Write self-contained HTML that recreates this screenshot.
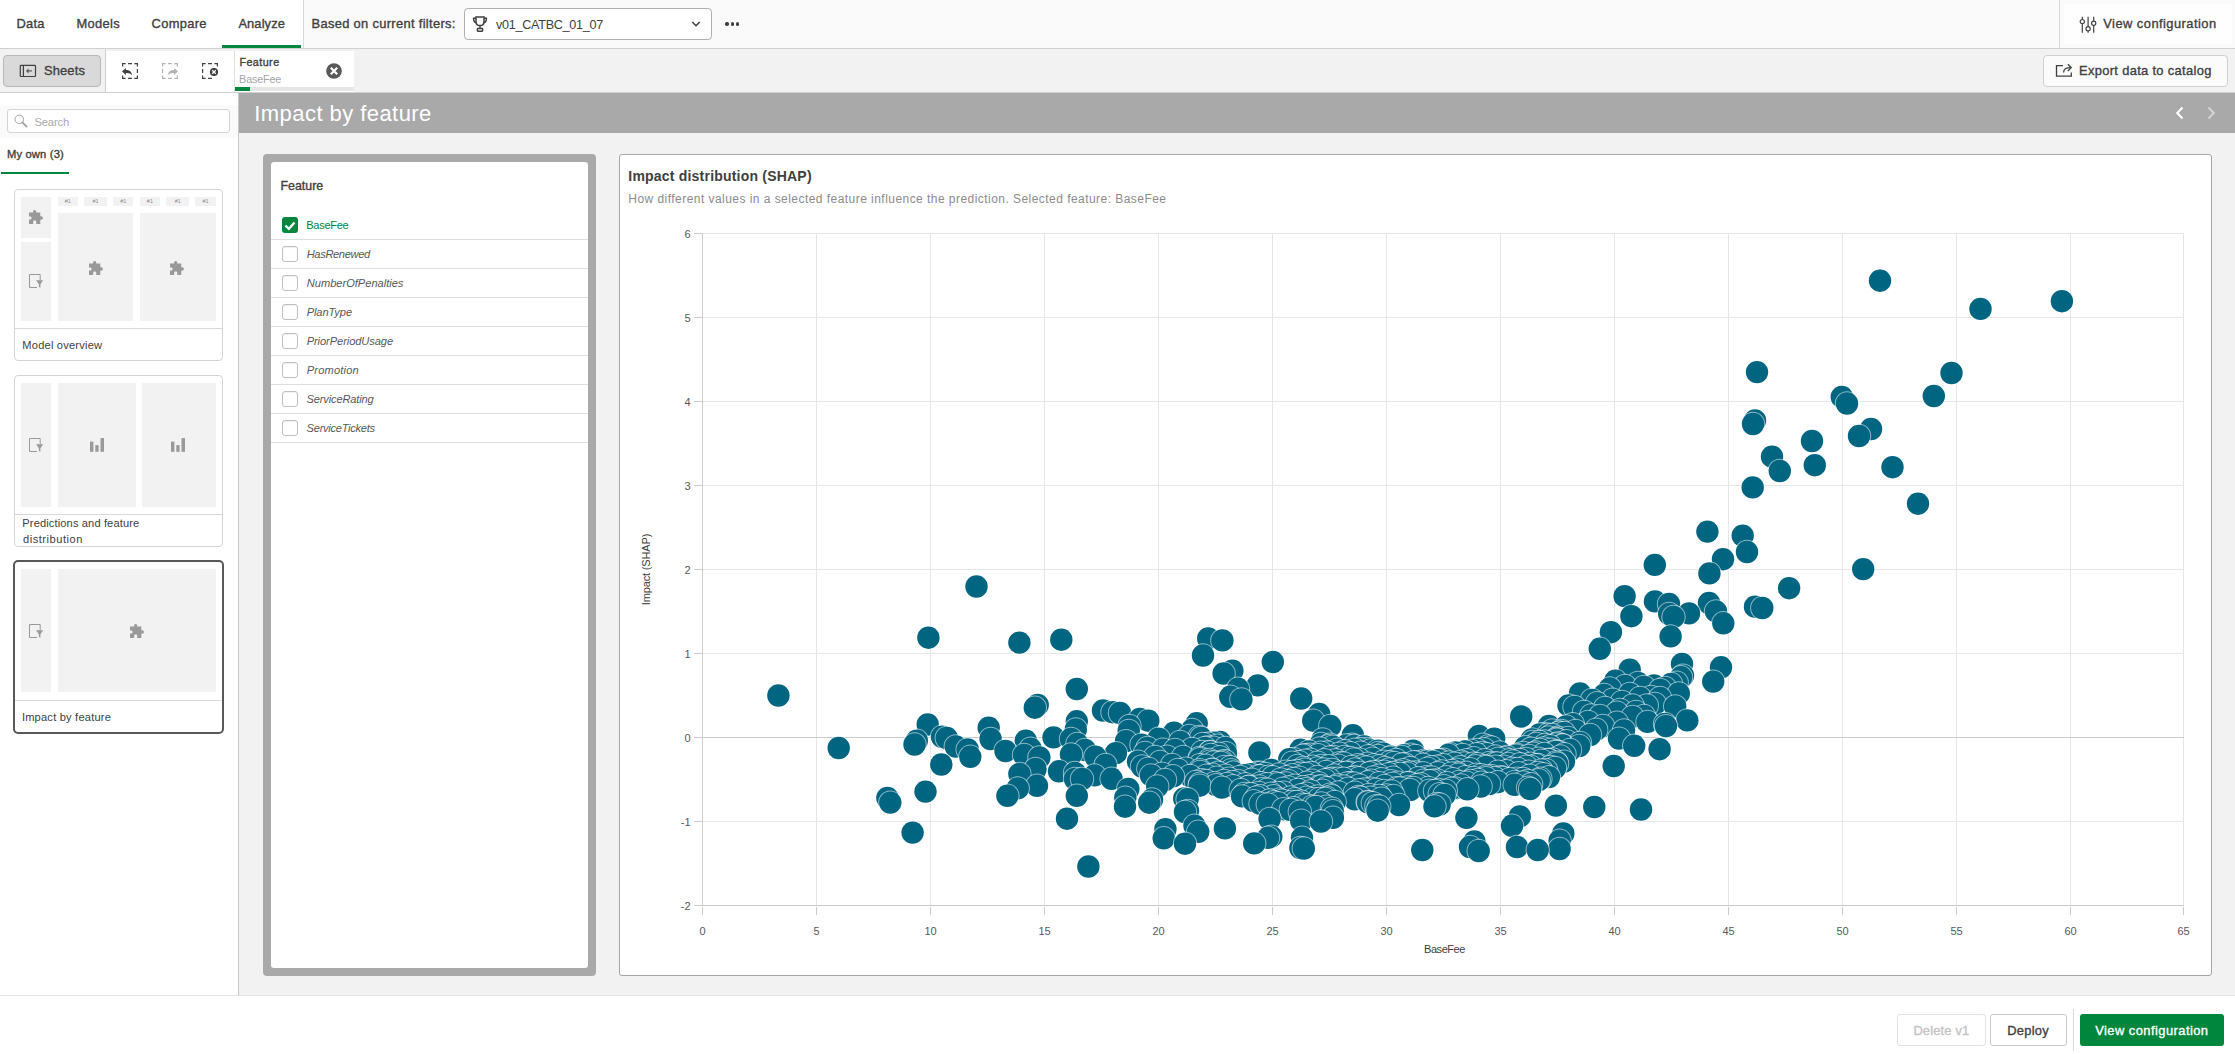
<!DOCTYPE html>
<html lang="en">
<head>
<meta charset="utf-8">
<title>Impact by feature</title>
<style>
*{box-sizing:border-box;margin:0;padding:0}
html,body{width:2235px;height:1054px;overflow:hidden;background:#fff}
body{font-family:"Liberation Sans",sans-serif;color:#404040;position:relative;font-size:13px}
.abs{position:absolute}
.t{position:absolute;white-space:nowrap;line-height:1}
#top{left:0;top:0;width:2235px;height:48px;background:#fafafa}
#topline{left:0;top:48px;width:2235px;height:1px;background:#d0d0d0}
#tabs{left:0;top:0;width:303px;height:48px;background:#fff}
#tabdiv{left:303px;top:0;width:1px;height:48px;background:#d9d9d9}
#analyzeline{left:222px;top:45px;width:79px;height:3px;background:#00873d}
#dd{left:464px;top:8px;width:248px;height:32px;background:#fff;border:1px solid #b0b0b0;border-radius:4px}
#vcdiv{left:2059px;top:0;width:1px;height:48px;background:#d9d9d9}
#vcbtn{left:2064px;top:4px;width:168px;height:40px;background:#fefefe;border-radius:4px}
#bar2{left:0;top:49px;width:2235px;height:43px;background:#f2f2f2}
#bar2line{left:0;top:92px;width:2235px;height:1px;background:#d0d0d0}
#sheetsbtn{left:3px;top:55px;width:98px;height:32px;background:#d9d9d9;border:1px solid #b8b8b8;border-radius:4px}
#bar2div{left:105px;top:49px;width:1px;height:44px;background:#cfcfcf}
#selbar{left:106px;top:51px;width:248px;height:41px;background:#fff}
#chipdiv{left:234px;top:51px;width:1px;height:41px;background:#e0e0e0}
#chipbar{left:235px;top:87px;width:119px;height:4px;background:#e6e6e6}
#chipbarg{left:235px;top:87px;width:15px;height:4px;background:#00873d}
#exportbtn{left:2043px;top:55px;width:185px;height:32px;background:#fbfbfb;border:1px solid #d0d0d0;border-radius:4px}
#side{left:0;top:93px;width:238px;height:902px;background:#fff}
#sideline{left:238px;top:93px;width:1px;height:902px;background:#c8c8c8}
#searchband{left:0;top:105px;width:238px;height:33px;background:#fafafa}
#search{left:7px;top:109px;width:223px;height:24px;background:#fff;border:1px solid #d4d4d4;border-radius:3px}
#myline{left:1px;top:172px;width:68px;height:2px;background:#00873d}
.card{background:#fff;border:1px solid #d4d4d4;border-radius:4px}
.cardline{height:1px;background:#d9d9d9}
.tile{background:#f2f2f2}
#main{left:239px;top:93px;width:1996px;height:902px;background:#f2f2f2}
#titlebar{left:239px;top:93px;width:1996px;height:40px;background:#a9a9a9}
#featouter{left:263px;top:154px;width:333px;height:822px;background:#a9a9a9;border-radius:4px}
#featinner{left:271px;top:162px;width:317px;height:806px;background:#fff;border-radius:3px}
.frow{left:271px;width:317px;height:1px;background:#dedede}
.cb{left:282px;width:16px;height:16px;border:1px solid #bfbfbf;border-radius:3px;background:#fff;box-shadow:inset 0 1px 1px rgba(0,0,0,0.06)}
#chart{left:619px;top:154px;width:1593px;height:822px;background:#fff;border:1px solid #a6a6a6;border-radius:3px}
#botline{left:0;top:995px;width:2235px;height:1px;background:#e3e3e3}
#bottom{left:0;top:996px;width:2235px;height:58px;background:#fff}
.btn{border:1px solid #c9c9c9;border-radius:3px;background:#fff;height:32px;top:1014px}
</style>
</head>
<body>
<div class="abs" id="top"></div>
<div class="abs" id="tabs"></div>
<div class="abs" id="tabdiv"></div>
<div class="abs" id="topline"></div>
<div class="abs" id="analyzeline"></div>
<div class="abs" id="dd"></div>
<div class="abs" id="vcdiv"></div>
<div class="abs" id="vcbtn"></div>
<div class="abs" id="bar2"></div>
<div class="abs" id="bar2line"></div>
<div class="abs" id="sheetsbtn"></div>
<div class="abs" id="bar2div"></div>
<div class="abs" id="selbar"></div>
<div class="abs" id="chipdiv"></div>
<div class="abs" id="chipbar"></div>
<div class="abs" id="chipbarg"></div>
<div class="abs" id="exportbtn"></div>
<div class="abs" id="side"></div>
<div class="abs" id="sideline"></div>
<div class="abs" id="searchband"></div>
<div class="abs" id="search"></div>
<div class="abs" id="myline"></div>
<div class="abs card" style="left:14px;top:189px;width:209px;height:172px"></div>
<div class="abs tile" style="left:21.4px;top:197.0px;width:29.8px;height:40.5px"></div>
<div class="abs tile" style="left:21.4px;top:242.0px;width:29.8px;height:79.0px"></div>
<div class="abs tile" style="left:57.7px;top:197.0px;width:20.1px;height:8.6px"></div>
<div class="t" style="left:57.7px;width:20.1px;text-align:center;top:199.3px;font-size:5.5px;color:#8c8c8c">#1</div>
<div class="abs tile" style="left:84.1px;top:197.0px;width:22.7px;height:8.6px"></div>
<div class="t" style="left:84.1px;width:22.7px;text-align:center;top:199.3px;font-size:5.5px;color:#8c8c8c">#1</div>
<div class="abs tile" style="left:113.3px;top:197.0px;width:20.1px;height:8.6px"></div>
<div class="t" style="left:113.3px;width:20.1px;text-align:center;top:199.3px;font-size:5.5px;color:#8c8c8c">#1</div>
<div class="abs tile" style="left:139.8px;top:197.0px;width:20.2px;height:8.6px"></div>
<div class="t" style="left:139.8px;width:20.2px;text-align:center;top:199.3px;font-size:5.5px;color:#8c8c8c">#1</div>
<div class="abs tile" style="left:166.4px;top:197.0px;width:22.6px;height:8.6px"></div>
<div class="t" style="left:166.4px;width:22.6px;text-align:center;top:199.3px;font-size:5.5px;color:#8c8c8c">#1</div>
<div class="abs tile" style="left:195.4px;top:197.0px;width:20.2px;height:8.6px"></div>
<div class="t" style="left:195.4px;width:20.2px;text-align:center;top:199.3px;font-size:5.5px;color:#8c8c8c">#1</div>
<div class="abs tile" style="left:57.7px;top:213.2px;width:75.7px;height:107.8px"></div>
<div class="abs tile" style="left:139.8px;top:213.2px;width:75.8px;height:107.8px"></div>
<div class="abs cardline" style="left:15px;top:328px;width:207px"></div>
<svg class="abs" style="left:28.9px;top:210.3px" width="14" height="14" viewBox="0 0 14 14"><path d="M0 2.4 H4.3 C3.6 1 4.6 0 5.7 0 C6.8 0 7.8 1 7.1 2.4 H11.3 V6.6 C12.7 5.9 13.9 6.9 13.9 8 C13.9 9.1 12.7 10.1 11.3 9.4 V13.9 H7.2 V11.2 C7.2 10.4 4.2 10.4 4.2 11.2 V13.9 H0 V9.6 H1.4 C3 9.6 3 6.6 1.4 6.6 H0 Z" fill="#999"/></svg>
<svg class="abs" style="left:29.0px;top:274.0px" width="15" height="15" viewBox="0 0 15 15"><path d="M11.2 6 V0.5 H0.5 V13.5 H8" fill="none" stroke="#999" stroke-width="1"/><path d="M7 6.3 H14.2 L11.4 10.2 V13.8 L9.9 12.9 V10.2 Z" fill="#999"/></svg>
<svg class="abs" style="left:88.5px;top:260.5px" width="14" height="14" viewBox="0 0 14 14"><path d="M0 2.4 H4.3 C3.6 1 4.6 0 5.7 0 C6.8 0 7.8 1 7.1 2.4 H11.3 V6.6 C12.7 5.9 13.9 6.9 13.9 8 C13.9 9.1 12.7 10.1 11.3 9.4 V13.9 H7.2 V11.2 C7.2 10.4 4.2 10.4 4.2 11.2 V13.9 H0 V9.6 H1.4 C3 9.6 3 6.6 1.4 6.6 H0 Z" fill="#999"/></svg>
<svg class="abs" style="left:170.2px;top:260.5px" width="14" height="14" viewBox="0 0 14 14"><path d="M0 2.4 H4.3 C3.6 1 4.6 0 5.7 0 C6.8 0 7.8 1 7.1 2.4 H11.3 V6.6 C12.7 5.9 13.9 6.9 13.9 8 C13.9 9.1 12.7 10.1 11.3 9.4 V13.9 H7.2 V11.2 C7.2 10.4 4.2 10.4 4.2 11.2 V13.9 H0 V9.6 H1.4 C3 9.6 3 6.6 1.4 6.6 H0 Z" fill="#999"/></svg>
<div class="abs card" style="left:14px;top:375px;width:209px;height:172px"></div>
<div class="abs tile" style="left:21.4px;top:383.3px;width:29.8px;height:123.3px"></div>
<div class="abs tile" style="left:57.7px;top:383.3px;width:78.2px;height:123.3px"></div>
<div class="abs tile" style="left:142.1px;top:383.3px;width:73.5px;height:123.3px"></div>
<div class="abs cardline" style="left:15px;top:514px;width:207px"></div>
<svg class="abs" style="left:29.0px;top:438.0px" width="15" height="15" viewBox="0 0 15 15"><path d="M11.2 6 V0.5 H0.5 V13.5 H8" fill="none" stroke="#999" stroke-width="1"/><path d="M7 6.3 H14.2 L11.4 10.2 V13.8 L9.9 12.9 V10.2 Z" fill="#999"/></svg>
<svg class="abs" style="left:89.8px;top:438.0px" width="14" height="14" viewBox="0 0 14 14"><rect x="0" y="3.6" width="3.4" height="10.2" fill="#999"/><rect x="5.3" y="7.1" width="3.3" height="6.7" fill="#999"/><rect x="10.5" y="0.1" width="3.5" height="13.7" fill="#999"/></svg>
<svg class="abs" style="left:171.4px;top:438.0px" width="14" height="14" viewBox="0 0 14 14"><rect x="0" y="3.6" width="3.4" height="10.2" fill="#999"/><rect x="5.3" y="7.1" width="3.3" height="6.7" fill="#999"/><rect x="10.5" y="0.1" width="3.5" height="13.7" fill="#999"/></svg>
<div class="abs card" style="left:13px;top:560px;width:211px;height:174px;border:2px solid #595959;border-radius:5px"></div>
<div class="abs tile" style="left:21.4px;top:569.0px;width:29.8px;height:123.3px"></div>
<div class="abs tile" style="left:57.7px;top:569.0px;width:157.9px;height:123.3px"></div>
<div class="abs cardline" style="left:15px;top:700px;width:207px"></div>
<svg class="abs" style="left:29.0px;top:624.0px" width="15" height="15" viewBox="0 0 15 15"><path d="M11.2 6 V0.5 H0.5 V13.5 H8" fill="none" stroke="#999" stroke-width="1"/><path d="M7 6.3 H14.2 L11.4 10.2 V13.8 L9.9 12.9 V10.2 Z" fill="#999"/></svg>
<svg class="abs" style="left:129.7px;top:624.3px" width="14" height="14" viewBox="0 0 14 14"><path d="M0 2.4 H4.3 C3.6 1 4.6 0 5.7 0 C6.8 0 7.8 1 7.1 2.4 H11.3 V6.6 C12.7 5.9 13.9 6.9 13.9 8 C13.9 9.1 12.7 10.1 11.3 9.4 V13.9 H7.2 V11.2 C7.2 10.4 4.2 10.4 4.2 11.2 V13.9 H0 V9.6 H1.4 C3 9.6 3 6.6 1.4 6.6 H0 Z" fill="#999"/></svg>
<div class="abs" id="main"></div>
<div class="abs" id="titlebar"></div>
<div class="abs" id="featouter"></div>
<div class="abs" id="featinner"></div>
<div class="abs frow" style="top:239px"></div>
<div class="abs" style="left:282px;top:217px;width:16px;height:16px;border-radius:3px;background:#00873d"></div>
<svg class="abs" style="left:282px;top:217px" width="16" height="16" viewBox="0 0 16 16"><path d="M3.4 8.6 L6.9 11.8 L12.5 5.6" fill="none" stroke="#fff" stroke-width="2.3"/></svg>
<div class="abs frow" style="top:268px"></div>
<div class="abs cb" style="top:246px"></div>
<div class="abs frow" style="top:297px"></div>
<div class="abs cb" style="top:275px"></div>
<div class="abs frow" style="top:326px"></div>
<div class="abs cb" style="top:304px"></div>
<div class="abs frow" style="top:355px"></div>
<div class="abs cb" style="top:333px"></div>
<div class="abs frow" style="top:384px"></div>
<div class="abs cb" style="top:362px"></div>
<div class="abs frow" style="top:413px"></div>
<div class="abs cb" style="top:391px"></div>
<div class="abs frow" style="top:442px"></div>
<div class="abs cb" style="top:420px"></div>
<div class="abs" id="chart"></div>
<svg class="abs" style="left:0;top:0" width="2235" height="1054" viewBox="0 0 2235 1054" font-family="Liberation Sans, sans-serif">
<line x1="816.5" y1="233" x2="816.5" y2="906" stroke="#e6e6e6" stroke-width="1"/>
<line x1="930.5" y1="233" x2="930.5" y2="906" stroke="#e6e6e6" stroke-width="1"/>
<line x1="1044.5" y1="233" x2="1044.5" y2="906" stroke="#e6e6e6" stroke-width="1"/>
<line x1="1158.5" y1="233" x2="1158.5" y2="906" stroke="#e6e6e6" stroke-width="1"/>
<line x1="1272.5" y1="233" x2="1272.5" y2="906" stroke="#e6e6e6" stroke-width="1"/>
<line x1="1386.5" y1="233" x2="1386.5" y2="906" stroke="#e6e6e6" stroke-width="1"/>
<line x1="1500.5" y1="233" x2="1500.5" y2="906" stroke="#e6e6e6" stroke-width="1"/>
<line x1="1614.5" y1="233" x2="1614.5" y2="906" stroke="#e6e6e6" stroke-width="1"/>
<line x1="1728.5" y1="233" x2="1728.5" y2="906" stroke="#e6e6e6" stroke-width="1"/>
<line x1="1842.5" y1="233" x2="1842.5" y2="906" stroke="#e6e6e6" stroke-width="1"/>
<line x1="1956.5" y1="233" x2="1956.5" y2="906" stroke="#e6e6e6" stroke-width="1"/>
<line x1="2070.5" y1="233" x2="2070.5" y2="906" stroke="#e6e6e6" stroke-width="1"/>
<line x1="2183.5" y1="233" x2="2183.5" y2="906" stroke="#e6e6e6" stroke-width="1"/>
<line x1="703" y1="233.5" x2="2184" y2="233.5" stroke="#e6e6e6" stroke-width="1"/>
<line x1="703" y1="317.5" x2="2184" y2="317.5" stroke="#e6e6e6" stroke-width="1"/>
<line x1="703" y1="401.5" x2="2184" y2="401.5" stroke="#e6e6e6" stroke-width="1"/>
<line x1="703" y1="485.5" x2="2184" y2="485.5" stroke="#e6e6e6" stroke-width="1"/>
<line x1="703" y1="569.5" x2="2184" y2="569.5" stroke="#e6e6e6" stroke-width="1"/>
<line x1="703" y1="653.5" x2="2184" y2="653.5" stroke="#e6e6e6" stroke-width="1"/>
<line x1="703" y1="737.5" x2="2184" y2="737.5" stroke="#cccccc" stroke-width="1"/>
<line x1="703" y1="821.5" x2="2184" y2="821.5" stroke="#e6e6e6" stroke-width="1"/>
<line x1="703" y1="905.5" x2="2184" y2="905.5" stroke="#cccccc" stroke-width="1"/>
<line x1="702.5" y1="907" x2="702.5" y2="915" stroke="#cccccc" stroke-width="1"/>
<line x1="816.5" y1="907" x2="816.5" y2="915" stroke="#cccccc" stroke-width="1"/>
<line x1="930.5" y1="907" x2="930.5" y2="915" stroke="#cccccc" stroke-width="1"/>
<line x1="1044.5" y1="907" x2="1044.5" y2="915" stroke="#cccccc" stroke-width="1"/>
<line x1="1158.5" y1="907" x2="1158.5" y2="915" stroke="#cccccc" stroke-width="1"/>
<line x1="1272.5" y1="907" x2="1272.5" y2="915" stroke="#cccccc" stroke-width="1"/>
<line x1="1386.5" y1="907" x2="1386.5" y2="915" stroke="#cccccc" stroke-width="1"/>
<line x1="1500.5" y1="907" x2="1500.5" y2="915" stroke="#cccccc" stroke-width="1"/>
<line x1="1614.5" y1="907" x2="1614.5" y2="915" stroke="#cccccc" stroke-width="1"/>
<line x1="1728.5" y1="907" x2="1728.5" y2="915" stroke="#cccccc" stroke-width="1"/>
<line x1="1842.5" y1="907" x2="1842.5" y2="915" stroke="#cccccc" stroke-width="1"/>
<line x1="1956.5" y1="907" x2="1956.5" y2="915" stroke="#cccccc" stroke-width="1"/>
<line x1="2070.5" y1="907" x2="2070.5" y2="915" stroke="#cccccc" stroke-width="1"/>
<line x1="2183.5" y1="907" x2="2183.5" y2="915" stroke="#cccccc" stroke-width="1"/>
<line x1="694" y1="233.5" x2="702" y2="233.5" stroke="#cccccc" stroke-width="1"/>
<line x1="694" y1="317.5" x2="702" y2="317.5" stroke="#cccccc" stroke-width="1"/>
<line x1="694" y1="401.5" x2="702" y2="401.5" stroke="#cccccc" stroke-width="1"/>
<line x1="694" y1="485.5" x2="702" y2="485.5" stroke="#cccccc" stroke-width="1"/>
<line x1="694" y1="569.5" x2="702" y2="569.5" stroke="#cccccc" stroke-width="1"/>
<line x1="694" y1="653.5" x2="702" y2="653.5" stroke="#cccccc" stroke-width="1"/>
<line x1="694" y1="737.5" x2="702" y2="737.5" stroke="#cccccc" stroke-width="1"/>
<line x1="694" y1="821.5" x2="702" y2="821.5" stroke="#cccccc" stroke-width="1"/>
<line x1="694" y1="905.5" x2="702" y2="905.5" stroke="#cccccc" stroke-width="1"/>
<line x1="702.5" y1="233" x2="702.5" y2="906" stroke="#cccccc" stroke-width="1"/>
<text x="702.5" y="935" font-size="11" fill="#595959" text-anchor="middle">0</text>
<text x="816.5" y="935" font-size="11" fill="#595959" text-anchor="middle">5</text>
<text x="930.5" y="935" font-size="11" fill="#595959" text-anchor="middle">10</text>
<text x="1044.5" y="935" font-size="11" fill="#595959" text-anchor="middle">15</text>
<text x="1158.5" y="935" font-size="11" fill="#595959" text-anchor="middle">20</text>
<text x="1272.5" y="935" font-size="11" fill="#595959" text-anchor="middle">25</text>
<text x="1386.5" y="935" font-size="11" fill="#595959" text-anchor="middle">30</text>
<text x="1500.5" y="935" font-size="11" fill="#595959" text-anchor="middle">35</text>
<text x="1614.5" y="935" font-size="11" fill="#595959" text-anchor="middle">40</text>
<text x="1728.5" y="935" font-size="11" fill="#595959" text-anchor="middle">45</text>
<text x="1842.5" y="935" font-size="11" fill="#595959" text-anchor="middle">50</text>
<text x="1956.5" y="935" font-size="11" fill="#595959" text-anchor="middle">55</text>
<text x="2070.5" y="935" font-size="11" fill="#595959" text-anchor="middle">60</text>
<text x="2183.5" y="935" font-size="11" fill="#595959" text-anchor="middle">65</text>
<text x="690.5" y="238.4" font-size="11" fill="#595959" text-anchor="end">6</text>
<text x="690.5" y="322.4" font-size="11" fill="#595959" text-anchor="end">5</text>
<text x="690.5" y="406.4" font-size="11" fill="#595959" text-anchor="end">4</text>
<text x="690.5" y="490.4" font-size="11" fill="#595959" text-anchor="end">3</text>
<text x="690.5" y="574.4" font-size="11" fill="#595959" text-anchor="end">2</text>
<text x="690.5" y="658.4" font-size="11" fill="#595959" text-anchor="end">1</text>
<text x="690.5" y="742.4" font-size="11" fill="#595959" text-anchor="end">0</text>
<text x="690.5" y="826.4" font-size="11" fill="#595959" text-anchor="end">-1</text>
<text x="690.5" y="910.4" font-size="11" fill="#595959" text-anchor="end">-2</text>
<text x="1444.5" y="953" font-size="11" fill="#404040" text-anchor="middle" letter-spacing="-0.45">BaseFee</text>
<text transform="translate(650,569.5) rotate(-90)" font-size="11" fill="#404040" text-anchor="middle" letter-spacing="-0.15">Impact (SHAP)</text>
<g fill="#006580" stroke="#ffffff" stroke-opacity="0.55" stroke-width="2" paint-order="stroke">
<circle cx="1880.0" cy="280.7" r="11.2"/>
<circle cx="2061.9" cy="301.2" r="11.2"/>
<circle cx="1980.5" cy="308.9" r="11.2"/>
<circle cx="1757.0" cy="372.1" r="11.2"/>
<circle cx="1951.5" cy="373.0" r="11.2"/>
<circle cx="1933.8" cy="396.0" r="11.2"/>
<circle cx="1841.8" cy="396.9" r="11.2"/>
<circle cx="1847.0" cy="403.5" r="11.2"/>
<circle cx="1755.0" cy="420.5" r="11.2"/>
<circle cx="1753.0" cy="424.0" r="11.2"/>
<circle cx="1871.0" cy="429.0" r="11.2"/>
<circle cx="1859.0" cy="436.0" r="11.2"/>
<circle cx="1812.0" cy="441.0" r="11.2"/>
<circle cx="1772.0" cy="456.7" r="11.2"/>
<circle cx="1814.8" cy="465.2" r="11.2"/>
<circle cx="1892.5" cy="467.2" r="11.2"/>
<circle cx="1779.8" cy="471.0" r="11.2"/>
<circle cx="1752.7" cy="487.4" r="11.2"/>
<circle cx="1918.0" cy="503.7" r="11.2"/>
<circle cx="1707.4" cy="531.6" r="11.2"/>
<circle cx="1742.7" cy="535.6" r="11.2"/>
<circle cx="1747.0" cy="552.0" r="11.2"/>
<circle cx="1723.0" cy="559.2" r="11.2"/>
<circle cx="1654.8" cy="564.9" r="11.2"/>
<circle cx="1863.2" cy="569.1" r="11.2"/>
<circle cx="1709.4" cy="573.4" r="11.2"/>
<circle cx="976.5" cy="586.5" r="11.2"/>
<circle cx="1789.1" cy="588.2" r="11.2"/>
<circle cx="1624.6" cy="596.2" r="11.2"/>
<circle cx="1655.0" cy="601.4" r="11.2"/>
<circle cx="1709.0" cy="603.0" r="11.2"/>
<circle cx="1669.0" cy="604.0" r="11.2"/>
<circle cx="1755.0" cy="606.7" r="11.2"/>
<circle cx="1762.3" cy="608.0" r="11.2"/>
<circle cx="1716.0" cy="611.4" r="11.2"/>
<circle cx="1689.0" cy="613.4" r="11.2"/>
<circle cx="1669.2" cy="614.0" r="11.2"/>
<circle cx="1631.4" cy="616.2" r="11.2"/>
<circle cx="1673.5" cy="617.0" r="11.2"/>
<circle cx="1723.3" cy="623.3" r="11.2"/>
<circle cx="1610.9" cy="632.2" r="11.2"/>
<circle cx="1670.6" cy="636.4" r="11.2"/>
<circle cx="928.4" cy="637.7" r="11.2"/>
<circle cx="1208.2" cy="638.4" r="11.2"/>
<circle cx="1061.3" cy="639.7" r="11.2"/>
<circle cx="1222.4" cy="640.4" r="11.2"/>
<circle cx="1019.4" cy="642.6" r="11.2"/>
<circle cx="1599.8" cy="648.8" r="11.2"/>
<circle cx="1203.0" cy="655.5" r="11.2"/>
<circle cx="1272.8" cy="662.0" r="11.2"/>
<circle cx="1682.0" cy="663.9" r="11.2"/>
<circle cx="1721.0" cy="667.3" r="11.2"/>
<circle cx="1629.7" cy="669.6" r="11.2"/>
<circle cx="1232.4" cy="670.6" r="11.2"/>
<circle cx="1223.6" cy="673.5" r="11.2"/>
<circle cx="1683.0" cy="675.6" r="11.2"/>
<circle cx="1681.0" cy="677.3" r="11.2"/>
<circle cx="1615.4" cy="680.6" r="11.2"/>
<circle cx="1713.2" cy="681.6" r="11.2"/>
<circle cx="1676.7" cy="682.7" r="11.2"/>
<circle cx="1638.0" cy="683.0" r="11.2"/>
<circle cx="1671.0" cy="684.0" r="11.2"/>
<circle cx="1257.7" cy="685.4" r="11.2"/>
<circle cx="1654.0" cy="685.5" r="11.2"/>
<circle cx="1625.0" cy="686.0" r="11.2"/>
<circle cx="1644.0" cy="687.0" r="11.2"/>
<circle cx="1665.0" cy="688.0" r="11.2"/>
<circle cx="1609.8" cy="688.4" r="11.2"/>
<circle cx="1238.0" cy="688.8" r="11.2"/>
<circle cx="1076.8" cy="689.0" r="11.2"/>
<circle cx="1660.0" cy="690.0" r="11.2"/>
<circle cx="1580.0" cy="693.4" r="11.2"/>
<circle cx="1678.8" cy="693.4" r="11.2"/>
<circle cx="1629.7" cy="694.0" r="11.2"/>
<circle cx="1604.0" cy="695.0" r="11.2"/>
<circle cx="778.4" cy="695.5" r="11.2"/>
<circle cx="1230.3" cy="696.8" r="11.2"/>
<circle cx="1651.0" cy="697.0" r="11.2"/>
<circle cx="1640.0" cy="698.0" r="11.2"/>
<circle cx="1660.0" cy="698.0" r="11.2"/>
<circle cx="1301.2" cy="698.5" r="11.2"/>
<circle cx="1241.4" cy="699.4" r="11.2"/>
<circle cx="1612.6" cy="699.8" r="11.2"/>
<circle cx="1592.0" cy="700.0" r="11.2"/>
<circle cx="1622.0" cy="702.0" r="11.2"/>
<circle cx="1597.0" cy="703.3" r="11.2"/>
<circle cx="1655.0" cy="704.0" r="11.2"/>
<circle cx="1037.7" cy="705.0" r="11.2"/>
<circle cx="1568.5" cy="705.4" r="11.2"/>
<circle cx="1646.8" cy="705.5" r="11.2"/>
<circle cx="1632.5" cy="705.5" r="11.2"/>
<circle cx="1675.2" cy="706.5" r="11.2"/>
<circle cx="1574.5" cy="707.0" r="11.2"/>
<circle cx="1034.8" cy="707.7" r="11.2"/>
<circle cx="1605.0" cy="708.0" r="11.2"/>
<circle cx="1620.0" cy="710.0" r="11.2"/>
<circle cx="1103.0" cy="710.5" r="11.2"/>
<circle cx="1584.0" cy="712.0" r="11.2"/>
<circle cx="1636.0" cy="712.0" r="11.2"/>
<circle cx="1112.5" cy="712.2" r="11.2"/>
<circle cx="1616.9" cy="712.6" r="11.2"/>
<circle cx="1120.0" cy="713.0" r="11.2"/>
<circle cx="1319.2" cy="713.9" r="11.2"/>
<circle cx="1591.2" cy="715.4" r="11.2"/>
<circle cx="1600.0" cy="716.0" r="11.2"/>
<circle cx="1644.0" cy="716.0" r="11.2"/>
<circle cx="1521.2" cy="716.5" r="11.2"/>
<circle cx="1632.5" cy="716.9" r="11.2"/>
<circle cx="1139.8" cy="719.0" r="11.2"/>
<circle cx="1687.3" cy="720.4" r="11.2"/>
<circle cx="1148.3" cy="720.7" r="11.2"/>
<circle cx="1313.2" cy="720.7" r="11.2"/>
<circle cx="1076.8" cy="721.3" r="11.2"/>
<circle cx="1647.5" cy="721.9" r="11.2"/>
<circle cx="1588.0" cy="722.0" r="11.2"/>
<circle cx="1616.9" cy="722.6" r="11.2"/>
<circle cx="1196.7" cy="723.3" r="11.2"/>
<circle cx="1665.0" cy="724.0" r="11.2"/>
<circle cx="1572.8" cy="724.2" r="11.2"/>
<circle cx="927.7" cy="724.5" r="11.2"/>
<circle cx="1129.5" cy="725.9" r="11.2"/>
<circle cx="1330.3" cy="725.9" r="11.2"/>
<circle cx="1548.9" cy="725.9" r="11.2"/>
<circle cx="1603.0" cy="726.0" r="11.2"/>
<circle cx="1666.0" cy="726.1" r="11.2"/>
<circle cx="1565.9" cy="726.4" r="11.2"/>
<circle cx="988.7" cy="727.7" r="11.2"/>
<circle cx="1075.8" cy="729.4" r="11.2"/>
<circle cx="1596.2" cy="729.7" r="11.2"/>
<circle cx="1192.0" cy="730.0" r="11.2"/>
<circle cx="1624.0" cy="730.4" r="11.2"/>
<circle cx="1552.1" cy="730.4" r="11.2"/>
<circle cx="1128.7" cy="731.0" r="11.2"/>
<circle cx="1561.4" cy="731.0" r="11.2"/>
<circle cx="1575.6" cy="731.0" r="11.2"/>
<circle cx="1560.0" cy="732.6" r="11.2"/>
<circle cx="1174.0" cy="732.7" r="11.2"/>
<circle cx="1559.0" cy="732.7" r="11.2"/>
<circle cx="1564.1" cy="733.0" r="11.2"/>
<circle cx="1543.8" cy="734.1" r="11.2"/>
<circle cx="1539.5" cy="734.4" r="11.2"/>
<circle cx="1548.0" cy="734.8" r="11.2"/>
<circle cx="1590.0" cy="735.0" r="11.2"/>
<circle cx="1552.0" cy="735.0" r="11.2"/>
<circle cx="1352.8" cy="735.2" r="11.2"/>
<circle cx="1189.3" cy="736.0" r="11.2"/>
<circle cx="1478.9" cy="736.0" r="11.2"/>
<circle cx="942.0" cy="736.8" r="11.2"/>
<circle cx="1199.6" cy="737.0" r="11.2"/>
<circle cx="1053.5" cy="737.4" r="11.2"/>
<circle cx="1548.5" cy="737.5" r="11.2"/>
<circle cx="1558.1" cy="737.8" r="11.2"/>
<circle cx="1201.1" cy="737.9" r="11.2"/>
<circle cx="946.8" cy="738.0" r="11.2"/>
<circle cx="1568.0" cy="738.0" r="11.2"/>
<circle cx="1619.0" cy="738.6" r="11.2"/>
<circle cx="1158.6" cy="738.7" r="11.2"/>
<circle cx="1494.2" cy="738.7" r="11.2"/>
<circle cx="1556.4" cy="738.9" r="11.2"/>
<circle cx="990.6" cy="739.0" r="11.2"/>
<circle cx="1071.0" cy="739.0" r="11.2"/>
<circle cx="1322.6" cy="739.5" r="11.2"/>
<circle cx="1531.8" cy="739.5" r="11.2"/>
<circle cx="1557.0" cy="739.6" r="11.2"/>
<circle cx="916.8" cy="740.6" r="11.2"/>
<circle cx="1025.8" cy="740.6" r="11.2"/>
<circle cx="1126.0" cy="741.2" r="11.2"/>
<circle cx="1566.5" cy="741.2" r="11.2"/>
<circle cx="1544.7" cy="741.5" r="11.2"/>
<circle cx="1532.5" cy="741.9" r="11.2"/>
<circle cx="1539.4" cy="741.9" r="11.2"/>
<circle cx="1220.0" cy="742.0" r="11.2"/>
<circle cx="1180.0" cy="742.0" r="11.2"/>
<circle cx="1213.7" cy="742.7" r="11.2"/>
<circle cx="1580.0" cy="743.0" r="11.2"/>
<circle cx="1557.7" cy="743.5" r="11.2"/>
<circle cx="1208.1" cy="743.7" r="11.2"/>
<circle cx="1077.4" cy="743.9" r="11.2"/>
<circle cx="1536.3" cy="743.9" r="11.2"/>
<circle cx="1320.9" cy="744.0" r="11.2"/>
<circle cx="1202.8" cy="744.0" r="11.2"/>
<circle cx="1556.2" cy="744.4" r="11.2"/>
<circle cx="914.5" cy="744.5" r="11.2"/>
<circle cx="1352.1" cy="744.6" r="11.2"/>
<circle cx="1141.5" cy="744.7" r="11.2"/>
<circle cx="1330.0" cy="744.7" r="11.2"/>
<circle cx="1483.0" cy="744.7" r="11.2"/>
<circle cx="1545.0" cy="745.0" r="11.2"/>
<circle cx="1562.8" cy="745.3" r="11.2"/>
<circle cx="1346.3" cy="745.4" r="11.2"/>
<circle cx="1562.8" cy="745.5" r="11.2"/>
<circle cx="1217.2" cy="745.8" r="11.2"/>
<circle cx="1634.2" cy="745.8" r="11.2"/>
<circle cx="1579.1" cy="746.0" r="11.2"/>
<circle cx="1353.9" cy="746.0" r="11.2"/>
<circle cx="1328.6" cy="746.1" r="11.2"/>
<circle cx="1550.0" cy="746.1" r="11.2"/>
<circle cx="1364.4" cy="746.4" r="11.2"/>
<circle cx="1488.0" cy="746.4" r="11.2"/>
<circle cx="955.8" cy="746.5" r="11.2"/>
<circle cx="1332.9" cy="746.6" r="11.2"/>
<circle cx="1525.2" cy="747.1" r="11.2"/>
<circle cx="1491.3" cy="747.5" r="11.2"/>
<circle cx="1207.9" cy="747.5" r="11.2"/>
<circle cx="1213.2" cy="747.6" r="11.2"/>
<circle cx="1225.3" cy="748.0" r="11.2"/>
<circle cx="838.7" cy="748.0" r="11.2"/>
<circle cx="1147.5" cy="748.0" r="11.2"/>
<circle cx="1205.0" cy="748.0" r="11.2"/>
<circle cx="1543.3" cy="748.4" r="11.2"/>
<circle cx="1319.6" cy="748.5" r="11.2"/>
<circle cx="1531.1" cy="748.6" r="11.2"/>
<circle cx="1030.6" cy="748.7" r="11.2"/>
<circle cx="1192.0" cy="749.0" r="11.2"/>
<circle cx="1367.4" cy="749.0" r="11.2"/>
<circle cx="1484.0" cy="749.2" r="11.2"/>
<circle cx="1659.6" cy="749.2" r="11.2"/>
<circle cx="1360.2" cy="749.3" r="11.2"/>
<circle cx="967.7" cy="749.4" r="11.2"/>
<circle cx="1354.8" cy="749.6" r="11.2"/>
<circle cx="1162.8" cy="749.8" r="11.2"/>
<circle cx="1300.4" cy="749.8" r="11.2"/>
<circle cx="1337.3" cy="749.8" r="11.2"/>
<circle cx="1551.0" cy="749.8" r="11.2"/>
<circle cx="1477.0" cy="749.9" r="11.2"/>
<circle cx="1085.0" cy="750.0" r="11.2"/>
<circle cx="1175.0" cy="750.0" r="11.2"/>
<circle cx="1570.0" cy="750.0" r="11.2"/>
<circle cx="1540.0" cy="750.0" r="11.2"/>
<circle cx="1370.7" cy="750.5" r="11.2"/>
<circle cx="1378.0" cy="750.6" r="11.2"/>
<circle cx="1413.1" cy="750.6" r="11.2"/>
<circle cx="1470.5" cy="750.6" r="11.2"/>
<circle cx="1005.5" cy="751.0" r="11.2"/>
<circle cx="1555.8" cy="751.2" r="11.2"/>
<circle cx="1345.0" cy="751.3" r="11.2"/>
<circle cx="1464.1" cy="751.4" r="11.2"/>
<circle cx="1308.9" cy="751.5" r="11.2"/>
<circle cx="1465.2" cy="751.5" r="11.2"/>
<circle cx="1202.2" cy="752.0" r="11.2"/>
<circle cx="1558.3" cy="752.0" r="11.2"/>
<circle cx="1210.0" cy="752.0" r="11.2"/>
<circle cx="1556.0" cy="752.0" r="11.2"/>
<circle cx="1209.9" cy="752.2" r="11.2"/>
<circle cx="1499.8" cy="752.4" r="11.2"/>
<circle cx="1259.4" cy="752.4" r="11.2"/>
<circle cx="1327.0" cy="752.4" r="11.2"/>
<circle cx="1535.5" cy="752.5" r="11.2"/>
<circle cx="1455.4" cy="752.5" r="11.2"/>
<circle cx="1320.9" cy="752.6" r="11.2"/>
<circle cx="1360.5" cy="752.8" r="11.2"/>
<circle cx="1378.6" cy="752.9" r="11.2"/>
<circle cx="1523.3" cy="752.9" r="11.2"/>
<circle cx="1145.0" cy="753.0" r="11.2"/>
<circle cx="1482.5" cy="753.0" r="11.2"/>
<circle cx="1350.5" cy="753.1" r="11.2"/>
<circle cx="1225.9" cy="753.2" r="11.2"/>
<circle cx="1115.9" cy="753.2" r="11.2"/>
<circle cx="1533.4" cy="753.7" r="11.2"/>
<circle cx="1339.3" cy="753.7" r="11.2"/>
<circle cx="1383.5" cy="753.8" r="11.2"/>
<circle cx="1218.6" cy="753.8" r="11.2"/>
<circle cx="1544.2" cy="754.0" r="11.2"/>
<circle cx="1449.8" cy="754.0" r="11.2"/>
<circle cx="1486.6" cy="754.1" r="11.2"/>
<circle cx="1564.5" cy="754.3" r="11.2"/>
<circle cx="1476.6" cy="754.3" r="11.2"/>
<circle cx="1071.0" cy="754.5" r="11.2"/>
<circle cx="1410.4" cy="754.8" r="11.2"/>
<circle cx="1516.8" cy="754.8" r="11.2"/>
<circle cx="1309.5" cy="754.8" r="11.2"/>
<circle cx="1210.8" cy="754.9" r="11.2"/>
<circle cx="1024.0" cy="755.0" r="11.2"/>
<circle cx="1462.7" cy="755.0" r="11.2"/>
<circle cx="1448.4" cy="755.0" r="11.2"/>
<circle cx="1305.2" cy="755.1" r="11.2"/>
<circle cx="1318.1" cy="755.3" r="11.2"/>
<circle cx="1403.7" cy="755.3" r="11.2"/>
<circle cx="1303.0" cy="755.6" r="11.2"/>
<circle cx="1516.4" cy="755.8" r="11.2"/>
<circle cx="1415.2" cy="756.0" r="11.2"/>
<circle cx="1377.9" cy="756.0" r="11.2"/>
<circle cx="1528.8" cy="756.0" r="11.2"/>
<circle cx="1368.3" cy="756.1" r="11.2"/>
<circle cx="1495.5" cy="756.4" r="11.2"/>
<circle cx="1560.3" cy="756.5" r="11.2"/>
<circle cx="1095.4" cy="756.6" r="11.2"/>
<circle cx="1167.0" cy="756.6" r="11.2"/>
<circle cx="1391.7" cy="756.6" r="11.2"/>
<circle cx="970.3" cy="756.8" r="11.2"/>
<circle cx="1401.6" cy="756.9" r="11.2"/>
<circle cx="1333.6" cy="757.0" r="11.2"/>
<circle cx="1183.0" cy="757.0" r="11.2"/>
<circle cx="1155.0" cy="757.0" r="11.2"/>
<circle cx="1506.8" cy="757.0" r="11.2"/>
<circle cx="1344.2" cy="757.0" r="11.2"/>
<circle cx="1219.6" cy="757.3" r="11.2"/>
<circle cx="1039.4" cy="757.4" r="11.2"/>
<circle cx="1329.6" cy="757.5" r="11.2"/>
<circle cx="1389.9" cy="757.7" r="11.2"/>
<circle cx="1350.0" cy="758.0" r="11.2"/>
<circle cx="1199.6" cy="758.0" r="11.2"/>
<circle cx="1473.8" cy="758.1" r="11.2"/>
<circle cx="1504.5" cy="758.3" r="11.2"/>
<circle cx="1372.5" cy="758.6" r="11.2"/>
<circle cx="1498.4" cy="758.7" r="11.2"/>
<circle cx="1538.5" cy="758.7" r="11.2"/>
<circle cx="1293.4" cy="758.9" r="11.2"/>
<circle cx="1525.9" cy="759.0" r="11.2"/>
<circle cx="1289.3" cy="759.2" r="11.2"/>
<circle cx="1199.8" cy="759.2" r="11.2"/>
<circle cx="1552.8" cy="759.4" r="11.2"/>
<circle cx="1359.0" cy="759.4" r="11.2"/>
<circle cx="1353.9" cy="759.5" r="11.2"/>
<circle cx="1310.4" cy="759.7" r="11.2"/>
<circle cx="1443.6" cy="759.7" r="11.2"/>
<circle cx="1548.4" cy="759.9" r="11.2"/>
<circle cx="1519.8" cy="759.9" r="11.2"/>
<circle cx="1209.3" cy="759.9" r="11.2"/>
<circle cx="1396.1" cy="760.0" r="11.2"/>
<circle cx="1439.6" cy="760.0" r="11.2"/>
<circle cx="1548.0" cy="760.0" r="11.2"/>
<circle cx="1484.8" cy="760.1" r="11.2"/>
<circle cx="1466.7" cy="760.2" r="11.2"/>
<circle cx="1509.4" cy="760.2" r="11.2"/>
<circle cx="1335.6" cy="760.2" r="11.2"/>
<circle cx="1324.4" cy="760.3" r="11.2"/>
<circle cx="1438.2" cy="760.3" r="11.2"/>
<circle cx="1541.7" cy="760.7" r="11.2"/>
<circle cx="1305.3" cy="760.7" r="11.2"/>
<circle cx="1424.2" cy="760.8" r="11.2"/>
<circle cx="1429.6" cy="761.0" r="11.2"/>
<circle cx="1225.0" cy="761.1" r="11.2"/>
<circle cx="1513.2" cy="761.4" r="11.2"/>
<circle cx="1138.0" cy="761.7" r="11.2"/>
<circle cx="1209.8" cy="761.7" r="11.2"/>
<circle cx="1221.8" cy="761.7" r="11.2"/>
<circle cx="1426.0" cy="761.7" r="11.2"/>
<circle cx="1564.0" cy="761.7" r="11.2"/>
<circle cx="1461.2" cy="761.7" r="11.2"/>
<circle cx="1383.4" cy="761.8" r="11.2"/>
<circle cx="1433.3" cy="762.0" r="11.2"/>
<circle cx="1160.0" cy="762.0" r="11.2"/>
<circle cx="1416.6" cy="762.1" r="11.2"/>
<circle cx="1389.9" cy="762.2" r="11.2"/>
<circle cx="1413.5" cy="762.2" r="11.2"/>
<circle cx="1299.2" cy="762.2" r="11.2"/>
<circle cx="1213.9" cy="762.5" r="11.2"/>
<circle cx="1556.2" cy="762.5" r="11.2"/>
<circle cx="1449.0" cy="762.5" r="11.2"/>
<circle cx="1317.6" cy="762.7" r="11.2"/>
<circle cx="1292.3" cy="762.7" r="11.2"/>
<circle cx="1394.2" cy="763.0" r="11.2"/>
<circle cx="1220.9" cy="763.0" r="11.2"/>
<circle cx="1339.8" cy="763.1" r="11.2"/>
<circle cx="1488.8" cy="763.2" r="11.2"/>
<circle cx="1494.7" cy="763.5" r="11.2"/>
<circle cx="1497.3" cy="763.5" r="11.2"/>
<circle cx="1464.1" cy="763.5" r="11.2"/>
<circle cx="1343.8" cy="763.5" r="11.2"/>
<circle cx="1530.5" cy="763.6" r="11.2"/>
<circle cx="1454.5" cy="763.6" r="11.2"/>
<circle cx="1557.1" cy="763.6" r="11.2"/>
<circle cx="1473.4" cy="763.7" r="11.2"/>
<circle cx="1368.1" cy="763.8" r="11.2"/>
<circle cx="1508.5" cy="763.9" r="11.2"/>
<circle cx="1477.8" cy="764.1" r="11.2"/>
<circle cx="1520.1" cy="764.2" r="11.2"/>
<circle cx="1404.6" cy="764.3" r="11.2"/>
<circle cx="1401.9" cy="764.4" r="11.2"/>
<circle cx="941.3" cy="764.5" r="11.2"/>
<circle cx="1423.1" cy="764.8" r="11.2"/>
<circle cx="1105.6" cy="765.0" r="11.2"/>
<circle cx="1172.0" cy="765.0" r="11.2"/>
<circle cx="1538.0" cy="765.0" r="11.2"/>
<circle cx="1374.0" cy="765.1" r="11.2"/>
<circle cx="1536.2" cy="765.1" r="11.2"/>
<circle cx="1357.9" cy="765.2" r="11.2"/>
<circle cx="1443.4" cy="765.3" r="11.2"/>
<circle cx="1199.7" cy="765.3" r="11.2"/>
<circle cx="1205.7" cy="765.6" r="11.2"/>
<circle cx="1338.3" cy="765.6" r="11.2"/>
<circle cx="1321.3" cy="765.9" r="11.2"/>
<circle cx="1297.5" cy="766.0" r="11.2"/>
<circle cx="1613.7" cy="766.0" r="11.2"/>
<circle cx="1328.8" cy="766.1" r="11.2"/>
<circle cx="1484.1" cy="766.2" r="11.2"/>
<circle cx="1475.6" cy="766.2" r="11.2"/>
<circle cx="1379.5" cy="766.2" r="11.2"/>
<circle cx="1142.0" cy="766.5" r="11.2"/>
<circle cx="1361.4" cy="766.5" r="11.2"/>
<circle cx="1437.0" cy="766.6" r="11.2"/>
<circle cx="1503.8" cy="766.6" r="11.2"/>
<circle cx="1313.1" cy="766.6" r="11.2"/>
<circle cx="1530.7" cy="766.6" r="11.2"/>
<circle cx="1495.7" cy="766.6" r="11.2"/>
<circle cx="1526.1" cy="766.7" r="11.2"/>
<circle cx="1351.4" cy="766.9" r="11.2"/>
<circle cx="1224.4" cy="766.9" r="11.2"/>
<circle cx="1550.2" cy="766.9" r="11.2"/>
<circle cx="1486.2" cy="767.0" r="11.2"/>
<circle cx="1460.3" cy="767.2" r="11.2"/>
<circle cx="1230.2" cy="767.2" r="11.2"/>
<circle cx="1431.3" cy="767.3" r="11.2"/>
<circle cx="1366.4" cy="767.5" r="11.2"/>
<circle cx="1303.4" cy="767.9" r="11.2"/>
<circle cx="1410.3" cy="767.9" r="11.2"/>
<circle cx="1384.8" cy="767.9" r="11.2"/>
<circle cx="1555.0" cy="768.0" r="11.2"/>
<circle cx="1317.3" cy="768.4" r="11.2"/>
<circle cx="1148.3" cy="768.6" r="11.2"/>
<circle cx="1186.0" cy="768.6" r="11.2"/>
<circle cx="1427.4" cy="768.6" r="11.2"/>
<circle cx="1512.0" cy="768.7" r="11.2"/>
<circle cx="1517.6" cy="768.9" r="11.2"/>
<circle cx="1035.5" cy="769.0" r="11.2"/>
<circle cx="1470.2" cy="769.1" r="11.2"/>
<circle cx="1323.8" cy="769.5" r="11.2"/>
<circle cx="1354.9" cy="769.5" r="11.2"/>
<circle cx="1389.1" cy="769.5" r="11.2"/>
<circle cx="1304.7" cy="769.7" r="11.2"/>
<circle cx="1212.1" cy="769.8" r="11.2"/>
<circle cx="1456.6" cy="769.8" r="11.2"/>
<circle cx="1212.0" cy="770.0" r="11.2"/>
<circle cx="1178.0" cy="770.0" r="11.2"/>
<circle cx="1271.4" cy="770.0" r="11.2"/>
<circle cx="1332.2" cy="770.0" r="11.2"/>
<circle cx="1199.8" cy="770.1" r="11.2"/>
<circle cx="1231.1" cy="770.1" r="11.2"/>
<circle cx="1546.2" cy="770.3" r="11.2"/>
<circle cx="1403.0" cy="770.3" r="11.2"/>
<circle cx="1541.3" cy="770.4" r="11.2"/>
<circle cx="1296.8" cy="770.9" r="11.2"/>
<circle cx="1451.8" cy="771.0" r="11.2"/>
<circle cx="1506.1" cy="771.2" r="11.2"/>
<circle cx="1059.0" cy="771.3" r="11.2"/>
<circle cx="1441.8" cy="771.5" r="11.2"/>
<circle cx="1286.1" cy="771.6" r="11.2"/>
<circle cx="1528.6" cy="771.7" r="11.2"/>
<circle cx="1378.0" cy="771.7" r="11.2"/>
<circle cx="1384.2" cy="771.7" r="11.2"/>
<circle cx="1497.9" cy="771.8" r="11.2"/>
<circle cx="1398.7" cy="771.8" r="11.2"/>
<circle cx="1372.9" cy="771.9" r="11.2"/>
<circle cx="1292.2" cy="771.9" r="11.2"/>
<circle cx="1200.0" cy="772.0" r="11.2"/>
<circle cx="1326.1" cy="772.0" r="11.2"/>
<circle cx="1415.9" cy="772.4" r="11.2"/>
<circle cx="1233.3" cy="772.5" r="11.2"/>
<circle cx="1409.9" cy="772.5" r="11.2"/>
<circle cx="1466.1" cy="772.6" r="11.2"/>
<circle cx="1257.1" cy="772.6" r="11.2"/>
<circle cx="1349.7" cy="772.6" r="11.2"/>
<circle cx="1260.5" cy="772.7" r="11.2"/>
<circle cx="1218.1" cy="772.7" r="11.2"/>
<circle cx="1339.6" cy="772.7" r="11.2"/>
<circle cx="1346.2" cy="772.7" r="11.2"/>
<circle cx="1538.1" cy="772.9" r="11.2"/>
<circle cx="1393.0" cy="772.9" r="11.2"/>
<circle cx="1311.1" cy="772.9" r="11.2"/>
<circle cx="1075.0" cy="773.0" r="11.2"/>
<circle cx="1360.0" cy="773.0" r="11.2"/>
<circle cx="1437.7" cy="773.1" r="11.2"/>
<circle cx="1369.4" cy="773.1" r="11.2"/>
<circle cx="1518.5" cy="773.1" r="11.2"/>
<circle cx="1457.4" cy="773.2" r="11.2"/>
<circle cx="1423.2" cy="773.3" r="11.2"/>
<circle cx="1451.4" cy="773.4" r="11.2"/>
<circle cx="1407.2" cy="773.7" r="11.2"/>
<circle cx="1162.0" cy="773.7" r="11.2"/>
<circle cx="1300.3" cy="773.8" r="11.2"/>
<circle cx="1265.6" cy="773.9" r="11.2"/>
<circle cx="1019.4" cy="773.9" r="11.2"/>
<circle cx="1305.8" cy="773.9" r="11.2"/>
<circle cx="1399.9" cy="774.0" r="11.2"/>
<circle cx="1543.4" cy="774.1" r="11.2"/>
<circle cx="1250.2" cy="774.2" r="11.2"/>
<circle cx="1388.8" cy="774.3" r="11.2"/>
<circle cx="1279.1" cy="774.4" r="11.2"/>
<circle cx="1476.2" cy="774.6" r="11.2"/>
<circle cx="1458.2" cy="774.8" r="11.2"/>
<circle cx="1212.8" cy="774.8" r="11.2"/>
<circle cx="1481.1" cy="775.3" r="11.2"/>
<circle cx="1292.3" cy="775.3" r="11.2"/>
<circle cx="1244.9" cy="775.3" r="11.2"/>
<circle cx="1094.5" cy="775.4" r="11.2"/>
<circle cx="1151.0" cy="775.4" r="11.2"/>
<circle cx="1334.4" cy="775.4" r="11.2"/>
<circle cx="1529.7" cy="775.6" r="11.2"/>
<circle cx="1206.5" cy="775.6" r="11.2"/>
<circle cx="1225.7" cy="775.8" r="11.2"/>
<circle cx="1378.8" cy="775.8" r="11.2"/>
<circle cx="1190.0" cy="776.0" r="11.2"/>
<circle cx="1491.9" cy="776.2" r="11.2"/>
<circle cx="1257.9" cy="776.3" r="11.2"/>
<circle cx="1173.0" cy="776.3" r="11.2"/>
<circle cx="1260.3" cy="776.3" r="11.2"/>
<circle cx="1486.6" cy="776.4" r="11.2"/>
<circle cx="1268.6" cy="776.7" r="11.2"/>
<circle cx="1240.0" cy="776.9" r="11.2"/>
<circle cx="1317.4" cy="777.0" r="11.2"/>
<circle cx="1426.5" cy="777.1" r="11.2"/>
<circle cx="1355.0" cy="777.1" r="11.2"/>
<circle cx="1548.9" cy="777.1" r="11.2"/>
<circle cx="1501.3" cy="777.1" r="11.2"/>
<circle cx="1286.3" cy="777.2" r="11.2"/>
<circle cx="1446.3" cy="777.2" r="11.2"/>
<circle cx="1465.4" cy="777.3" r="11.2"/>
<circle cx="1272.7" cy="777.3" r="11.2"/>
<circle cx="1373.4" cy="777.4" r="11.2"/>
<circle cx="1431.5" cy="777.5" r="11.2"/>
<circle cx="1393.1" cy="777.6" r="11.2"/>
<circle cx="1299.2" cy="777.7" r="11.2"/>
<circle cx="1216.8" cy="777.8" r="11.2"/>
<circle cx="1473.8" cy="777.9" r="11.2"/>
<circle cx="1502.2" cy="777.9" r="11.2"/>
<circle cx="1351.5" cy="778.1" r="11.2"/>
<circle cx="1494.7" cy="778.2" r="11.2"/>
<circle cx="1418.4" cy="778.2" r="11.2"/>
<circle cx="1486.2" cy="778.3" r="11.2"/>
<circle cx="1359.0" cy="778.3" r="11.2"/>
<circle cx="1228.9" cy="778.6" r="11.2"/>
<circle cx="1516.7" cy="778.6" r="11.2"/>
<circle cx="1331.9" cy="778.7" r="11.2"/>
<circle cx="1111.6" cy="778.8" r="11.2"/>
<circle cx="1540.4" cy="778.8" r="11.2"/>
<circle cx="1337.5" cy="778.8" r="11.2"/>
<circle cx="1343.4" cy="778.8" r="11.2"/>
<circle cx="1293.9" cy="779.0" r="11.2"/>
<circle cx="1075.0" cy="779.0" r="11.2"/>
<circle cx="1082.0" cy="779.0" r="11.2"/>
<circle cx="1523.1" cy="779.0" r="11.2"/>
<circle cx="1381.7" cy="779.1" r="11.2"/>
<circle cx="1509.6" cy="779.2" r="11.2"/>
<circle cx="1453.0" cy="779.3" r="11.2"/>
<circle cx="1329.1" cy="779.4" r="11.2"/>
<circle cx="1280.8" cy="779.5" r="11.2"/>
<circle cx="1251.9" cy="779.6" r="11.2"/>
<circle cx="1477.9" cy="780.0" r="11.2"/>
<circle cx="1165.0" cy="780.0" r="11.2"/>
<circle cx="1324.9" cy="780.1" r="11.2"/>
<circle cx="1538.7" cy="780.2" r="11.2"/>
<circle cx="1201.6" cy="780.3" r="11.2"/>
<circle cx="1437.2" cy="780.4" r="11.2"/>
<circle cx="1371.1" cy="780.6" r="11.2"/>
<circle cx="1433.0" cy="780.6" r="11.2"/>
<circle cx="1312.3" cy="780.8" r="11.2"/>
<circle cx="1423.3" cy="780.8" r="11.2"/>
<circle cx="1205.9" cy="780.9" r="11.2"/>
<circle cx="1223.9" cy="780.9" r="11.2"/>
<circle cx="1470.5" cy="780.9" r="11.2"/>
<circle cx="1528.0" cy="780.9" r="11.2"/>
<circle cx="1288.6" cy="781.1" r="11.2"/>
<circle cx="1429.9" cy="781.2" r="11.2"/>
<circle cx="1391.0" cy="781.2" r="11.2"/>
<circle cx="1238.4" cy="781.3" r="11.2"/>
<circle cx="1514.7" cy="782.0" r="11.2"/>
<circle cx="1459.2" cy="782.0" r="11.2"/>
<circle cx="1196.0" cy="782.0" r="11.2"/>
<circle cx="1368.1" cy="782.1" r="11.2"/>
<circle cx="1497.7" cy="782.2" r="11.2"/>
<circle cx="1232.8" cy="782.2" r="11.2"/>
<circle cx="1523.2" cy="782.5" r="11.2"/>
<circle cx="1306.9" cy="782.7" r="11.2"/>
<circle cx="1466.5" cy="782.7" r="11.2"/>
<circle cx="1481.5" cy="782.8" r="11.2"/>
<circle cx="1397.5" cy="782.8" r="11.2"/>
<circle cx="1409.0" cy="783.0" r="11.2"/>
<circle cx="1318.5" cy="783.1" r="11.2"/>
<circle cx="1407.6" cy="783.1" r="11.2"/>
<circle cx="1350.0" cy="783.2" r="11.2"/>
<circle cx="1379.2" cy="783.3" r="11.2"/>
<circle cx="1275.1" cy="783.3" r="11.2"/>
<circle cx="1261.0" cy="783.3" r="11.2"/>
<circle cx="1214.5" cy="783.3" r="11.2"/>
<circle cx="1447.2" cy="783.3" r="11.2"/>
<circle cx="1286.1" cy="783.4" r="11.2"/>
<circle cx="1347.2" cy="783.5" r="11.2"/>
<circle cx="1354.3" cy="783.5" r="11.2"/>
<circle cx="1392.7" cy="783.8" r="11.2"/>
<circle cx="1200.1" cy="783.8" r="11.2"/>
<circle cx="1489.0" cy="784.0" r="11.2"/>
<circle cx="1227.1" cy="784.0" r="11.2"/>
<circle cx="1245.3" cy="784.2" r="11.2"/>
<circle cx="1531.1" cy="784.2" r="11.2"/>
<circle cx="1266.8" cy="784.2" r="11.2"/>
<circle cx="1420.9" cy="784.3" r="11.2"/>
<circle cx="1277.8" cy="784.3" r="11.2"/>
<circle cx="1514.7" cy="784.8" r="11.2"/>
<circle cx="1417.2" cy="785.2" r="11.2"/>
<circle cx="1216.2" cy="785.2" r="11.2"/>
<circle cx="1461.2" cy="785.4" r="11.2"/>
<circle cx="1359.4" cy="785.5" r="11.2"/>
<circle cx="1337.3" cy="785.5" r="11.2"/>
<circle cx="1294.7" cy="785.6" r="11.2"/>
<circle cx="1199.6" cy="785.7" r="11.2"/>
<circle cx="1037.0" cy="785.8" r="11.2"/>
<circle cx="1384.7" cy="785.9" r="11.2"/>
<circle cx="1233.1" cy="786.1" r="11.2"/>
<circle cx="1310.0" cy="786.1" r="11.2"/>
<circle cx="1444.0" cy="786.2" r="11.2"/>
<circle cx="1259.0" cy="786.4" r="11.2"/>
<circle cx="1157.2" cy="786.5" r="11.2"/>
<circle cx="1343.9" cy="786.5" r="11.2"/>
<circle cx="1480.6" cy="786.5" r="11.2"/>
<circle cx="1319.7" cy="786.5" r="11.2"/>
<circle cx="1321.6" cy="786.5" r="11.2"/>
<circle cx="1249.0" cy="786.8" r="11.2"/>
<circle cx="1248.3" cy="787.0" r="11.2"/>
<circle cx="1334.9" cy="787.1" r="11.2"/>
<circle cx="1303.4" cy="787.3" r="11.2"/>
<circle cx="1407.5" cy="787.5" r="11.2"/>
<circle cx="1288.5" cy="787.5" r="11.2"/>
<circle cx="1221.8" cy="787.6" r="11.2"/>
<circle cx="1528.1" cy="787.6" r="11.2"/>
<circle cx="1428.3" cy="787.9" r="11.2"/>
<circle cx="1413.0" cy="788.0" r="11.2"/>
<circle cx="1326.3" cy="788.3" r="11.2"/>
<circle cx="1396.8" cy="788.3" r="11.2"/>
<circle cx="1399.8" cy="788.4" r="11.2"/>
<circle cx="1017.7" cy="788.4" r="11.2"/>
<circle cx="1455.1" cy="788.4" r="11.2"/>
<circle cx="1348.3" cy="788.6" r="11.2"/>
<circle cx="1451.5" cy="788.7" r="11.2"/>
<circle cx="1370.7" cy="788.7" r="11.2"/>
<circle cx="1283.1" cy="788.8" r="11.2"/>
<circle cx="1128.3" cy="789.0" r="11.2"/>
<circle cx="1530.1" cy="789.0" r="11.2"/>
<circle cx="1306.1" cy="789.2" r="11.2"/>
<circle cx="1261.7" cy="789.3" r="11.2"/>
<circle cx="1467.3" cy="789.3" r="11.2"/>
<circle cx="1364.7" cy="789.5" r="11.2"/>
<circle cx="1267.3" cy="789.6" r="11.2"/>
<circle cx="1375.9" cy="789.8" r="11.2"/>
<circle cx="1409.9" cy="790.0" r="11.2"/>
<circle cx="1240.7" cy="790.0" r="11.2"/>
<circle cx="1297.9" cy="790.0" r="11.2"/>
<circle cx="1438.8" cy="790.0" r="11.2"/>
<circle cx="1359.2" cy="790.1" r="11.2"/>
<circle cx="1445.8" cy="790.7" r="11.2"/>
<circle cx="1322.5" cy="790.7" r="11.2"/>
<circle cx="1429.3" cy="790.8" r="11.2"/>
<circle cx="1383.8" cy="790.9" r="11.2"/>
<circle cx="1435.0" cy="791.0" r="11.2"/>
<circle cx="1310.7" cy="791.2" r="11.2"/>
<circle cx="1391.4" cy="791.4" r="11.2"/>
<circle cx="925.5" cy="791.6" r="11.2"/>
<circle cx="1338.6" cy="792.5" r="11.2"/>
<circle cx="1354.8" cy="792.6" r="11.2"/>
<circle cx="1283.8" cy="792.8" r="11.2"/>
<circle cx="1277.3" cy="792.9" r="11.2"/>
<circle cx="1258.9" cy="793.0" r="11.2"/>
<circle cx="1271.1" cy="793.8" r="11.2"/>
<circle cx="1306.5" cy="793.8" r="11.2"/>
<circle cx="1244.4" cy="793.9" r="11.2"/>
<circle cx="1250.8" cy="794.1" r="11.2"/>
<circle cx="1439.7" cy="794.2" r="11.2"/>
<circle cx="1329.9" cy="794.7" r="11.2"/>
<circle cx="1369.0" cy="795.0" r="11.2"/>
<circle cx="1444.5" cy="795.0" r="11.2"/>
<circle cx="1301.1" cy="795.3" r="11.2"/>
<circle cx="1386.6" cy="795.5" r="11.2"/>
<circle cx="1007.4" cy="795.8" r="11.2"/>
<circle cx="1076.8" cy="795.8" r="11.2"/>
<circle cx="1393.5" cy="796.0" r="11.2"/>
<circle cx="1379.1" cy="796.0" r="11.2"/>
<circle cx="1331.9" cy="796.1" r="11.2"/>
<circle cx="1273.6" cy="796.2" r="11.2"/>
<circle cx="1260.0" cy="796.3" r="11.2"/>
<circle cx="1242.1" cy="796.4" r="11.2"/>
<circle cx="1317.8" cy="796.5" r="11.2"/>
<circle cx="1358.4" cy="797.0" r="11.2"/>
<circle cx="1256.5" cy="797.5" r="11.2"/>
<circle cx="1290.6" cy="797.5" r="11.2"/>
<circle cx="1125.3" cy="797.6" r="11.2"/>
<circle cx="1370.5" cy="797.6" r="11.2"/>
<circle cx="1360.5" cy="797.7" r="11.2"/>
<circle cx="1326.5" cy="797.7" r="11.2"/>
<circle cx="1306.6" cy="797.7" r="11.2"/>
<circle cx="887.4" cy="798.0" r="11.2"/>
<circle cx="1184.2" cy="798.5" r="11.2"/>
<circle cx="1381.3" cy="798.7" r="11.2"/>
<circle cx="1313.4" cy="798.9" r="11.2"/>
<circle cx="1319.2" cy="798.9" r="11.2"/>
<circle cx="1325.4" cy="798.9" r="11.2"/>
<circle cx="1295.0" cy="799.3" r="11.2"/>
<circle cx="1187.6" cy="799.3" r="11.2"/>
<circle cx="1354.8" cy="799.3" r="11.2"/>
<circle cx="1279.2" cy="799.4" r="11.2"/>
<circle cx="1152.0" cy="799.5" r="11.2"/>
<circle cx="1269.7" cy="800.5" r="11.2"/>
<circle cx="1282.1" cy="800.6" r="11.2"/>
<circle cx="1253.8" cy="801.2" r="11.2"/>
<circle cx="1300.7" cy="801.5" r="11.2"/>
<circle cx="1291.7" cy="801.9" r="11.2"/>
<circle cx="1296.6" cy="801.9" r="11.2"/>
<circle cx="1334.7" cy="801.9" r="11.2"/>
<circle cx="1367.6" cy="802.0" r="11.2"/>
<circle cx="1273.7" cy="802.1" r="11.2"/>
<circle cx="1368.2" cy="802.4" r="11.2"/>
<circle cx="890.3" cy="802.6" r="11.2"/>
<circle cx="1149.2" cy="802.7" r="11.2"/>
<circle cx="1372.8" cy="803.1" r="11.2"/>
<circle cx="1278.1" cy="803.1" r="11.2"/>
<circle cx="1321.3" cy="803.4" r="11.2"/>
<circle cx="1260.5" cy="803.8" r="11.2"/>
<circle cx="1437.0" cy="804.0" r="11.2"/>
<circle cx="1267.8" cy="804.4" r="11.2"/>
<circle cx="1439.6" cy="804.5" r="11.2"/>
<circle cx="1302.6" cy="804.7" r="11.2"/>
<circle cx="1399.0" cy="805.0" r="11.2"/>
<circle cx="1306.2" cy="805.1" r="11.2"/>
<circle cx="1555.9" cy="805.6" r="11.2"/>
<circle cx="1376.4" cy="806.2" r="11.2"/>
<circle cx="1379.2" cy="806.4" r="11.2"/>
<circle cx="1434.5" cy="806.4" r="11.2"/>
<circle cx="1312.3" cy="806.6" r="11.2"/>
<circle cx="1125.0" cy="806.7" r="11.2"/>
<circle cx="1326.2" cy="806.8" r="11.2"/>
<circle cx="1315.6" cy="807.0" r="11.2"/>
<circle cx="1594.3" cy="807.0" r="11.2"/>
<circle cx="1293.6" cy="808.3" r="11.2"/>
<circle cx="1331.9" cy="808.7" r="11.2"/>
<circle cx="1283.3" cy="809.2" r="11.2"/>
<circle cx="1641.0" cy="809.5" r="11.2"/>
<circle cx="1290.8" cy="810.0" r="11.2"/>
<circle cx="1377.6" cy="810.7" r="11.2"/>
<circle cx="1188.0" cy="811.0" r="11.2"/>
<circle cx="1332.8" cy="811.3" r="11.2"/>
<circle cx="1299.8" cy="811.6" r="11.2"/>
<circle cx="1185.0" cy="812.0" r="11.2"/>
<circle cx="1519.8" cy="816.4" r="11.2"/>
<circle cx="1332.9" cy="817.8" r="11.2"/>
<circle cx="1466.4" cy="817.8" r="11.2"/>
<circle cx="1067.0" cy="818.7" r="11.2"/>
<circle cx="1269.6" cy="819.0" r="11.2"/>
<circle cx="1301.2" cy="820.7" r="11.2"/>
<circle cx="1320.9" cy="821.5" r="11.2"/>
<circle cx="1194.5" cy="825.8" r="11.2"/>
<circle cx="1512.0" cy="825.8" r="11.2"/>
<circle cx="1224.9" cy="828.4" r="11.2"/>
<circle cx="1165.4" cy="829.2" r="11.2"/>
<circle cx="1198.2" cy="831.8" r="11.2"/>
<circle cx="912.6" cy="832.6" r="11.2"/>
<circle cx="1563.3" cy="833.5" r="11.2"/>
<circle cx="1271.3" cy="836.6" r="11.2"/>
<circle cx="1268.0" cy="837.8" r="11.2"/>
<circle cx="1302.0" cy="837.8" r="11.2"/>
<circle cx="1163.7" cy="838.3" r="11.2"/>
<circle cx="1559.6" cy="840.6" r="11.2"/>
<circle cx="1474.4" cy="841.4" r="11.2"/>
<circle cx="1254.2" cy="843.4" r="11.2"/>
<circle cx="1185.0" cy="843.7" r="11.2"/>
<circle cx="1470.0" cy="847.0" r="11.2"/>
<circle cx="1517.0" cy="847.0" r="11.2"/>
<circle cx="1300.4" cy="848.0" r="11.2"/>
<circle cx="1303.8" cy="848.5" r="11.2"/>
<circle cx="1559.6" cy="849.0" r="11.2"/>
<circle cx="1422.3" cy="850.0" r="11.2"/>
<circle cx="1537.7" cy="850.0" r="11.2"/>
<circle cx="1478.7" cy="851.0" r="11.2"/>
<circle cx="1088.4" cy="866.5" r="11.2"/>
</g></svg>
<div class="abs" id="botline"></div>
<div class="abs" id="bottom"></div>
<div class="abs btn" style="left:1897px;width:89px;border-color:#e3e3e3"></div>
<div class="abs btn" style="left:1990px;width:77px"></div>
<div class="abs" style="left:2073px;top:1009px;width:1px;height:42px;background:#d9d9d9"></div>
<div class="abs" style="left:2080px;top:1014px;width:144px;height:32px;background:#00873d;border-radius:3px"></div>
<svg class="abs" style="left:472px;top:16px" width="16" height="16" viewBox="0 0 16 16" fill="none" stroke="#404040" stroke-width="1.5"><path d="M4 1 H12 V5.5 C12 8 10.2 9.6 8 9.6 C5.8 9.6 4 8 4 5.5 Z"/><path d="M4 2.3 H1.6 C1.4 5 2.6 6.4 4.4 6.8 M12 2.3 H14.4 C14.6 5 13.4 6.4 11.6 6.8"/><path d="M8 9.6 V12.6"/><rect x="5.4" y="12.6" width="5.2" height="2.6" rx="0.6"/></svg>
<svg class="abs" style="left:691px;top:20px" width="10" height="8" viewBox="0 0 10 8"><path d="M1.3 2 L5 5.7 L8.7 2" fill="none" stroke="#404040" stroke-width="1.6"/></svg>
<div class="abs" style="left:725.4px;top:22.4px;width:3.4px;height:3.4px;border-radius:50%;background:#404040"></div>
<div class="abs" style="left:730.5px;top:22.4px;width:3.4px;height:3.4px;border-radius:50%;background:#404040"></div>
<div class="abs" style="left:735.6px;top:22.4px;width:3.4px;height:3.4px;border-radius:50%;background:#404040"></div>
<svg class="abs" style="left:2079px;top:16px" width="18" height="18" viewBox="0 0 18 18" fill="none" stroke="#404040" stroke-width="1.2"><path d="M3.3 0.8 V3.4 M3.3 7.8 V16.8 M9.1 0.8 V10.5 M9.1 14.9 V16.8 M14.7 0.8 V5 M14.7 9.4 V16.8"/><circle cx="3.3" cy="5.6" r="2.1"/><circle cx="9.1" cy="12.7" r="2.1"/><circle cx="14.7" cy="7.2" r="2.1"/></svg>
<svg class="abs" style="left:19px;top:64px" width="18" height="14" viewBox="0 0 18 14" fill="none"><rect x="1.3" y="1.3" width="15.2" height="11.2" rx="0.8" stroke="#404040" stroke-width="1.2"/><path d="M4.4 1.3 V12.5" stroke="#404040" stroke-width="1.2"/><path d="M13 6.9 H8.2" stroke="#595959" stroke-width="1.2"/><path d="M9.6 4.4 L6.9 6.9 L9.6 9.4 Z" fill="#595959"/></svg>
<svg class="abs" style="left:122px;top:63px" width="16" height="16" viewBox="0 0 16 16"><path d="M0.6 3.6 V0.6 H3.6 M6 0.6 H10 M12.4 0.6 H15.4 V3.6 M0.6 12.4 V15.4 H3.6 M6 15.4 H10 M15.4 6 V10 M12.4 15.4 H15.4 V12.4" fill="none" stroke="#404040" stroke-width="1.2"/><path d="M-0.1 8.5 L3.9 5.1 V7 C7.4 7 9.7 8.7 10.1 12.4 C8.7 10.5 7 9.9 3.9 10 V11.9 Z" fill="#404040"/></svg>
<svg class="abs" style="left:162px;top:63px" width="16" height="16" viewBox="0 0 16 16"><path d="M0.6 3.6 V0.6 H3.6 M6 0.6 H10 M12.4 0.6 H15.4 V3.6 M0.6 6 V10 M0.6 12.4 V15.4 H3.6 M6 15.4 H10 M12.4 15.4 H15.4 V12.4" fill="none" stroke="#b3b3b3" stroke-width="1.2"/><path d="M16.1 8.5 L12.1 5.1 V7 C8.6 7 6.3 8.7 5.9 12.4 C7.3 10.5 9 9.9 12.1 10 V11.9 Z" fill="#b3b3b3"/></svg>
<svg class="abs" style="left:202px;top:63px" width="17" height="17" viewBox="0 0 17 17"><path d="M0.6 3.6 V0.6 H3.6 M6 0.6 H10 M12.4 0.6 H15.4 V3.6 M0.6 6 V10 M0.6 12.4 V15.4 H3.6 M6 15.4 H10" fill="none" stroke="#404040" stroke-width="1.2"/><circle cx="12" cy="9" r="4.1" fill="#404040"/><path d="M10.2 7.2 L13.8 10.8 M13.8 7.2 L10.2 10.8" stroke="#fff" stroke-width="1.3"/></svg>
<svg class="abs" style="left:326px;top:63px" width="16" height="16" viewBox="0 0 16 16"><circle cx="8" cy="8" r="7.8" fill="#595959"/><path d="M4.8 4.8 L11.2 11.2 M11.2 4.8 L4.8 11.2" stroke="#fff" stroke-width="2.2"/></svg>
<svg class="abs" style="left:2055px;top:62px" width="18" height="16" viewBox="0 0 18 16" fill="none" stroke="#404040" stroke-width="1.3"><path d="M8 3.7 H1.5 V14.2 H16.3 V10.5"/><path d="M8.6 10.6 C8.6 7.2 11 5.6 15.6 5.6"/><path d="M12.8 2.2 L16.2 5.6 L12.8 9"/></svg>
<svg class="abs" style="left:14px;top:114px" width="14" height="14" viewBox="0 0 14 14" fill="none" stroke="#a6a6a6"><circle cx="5.3" cy="5.3" r="4.3" stroke-width="1"/><path d="M8.5 8.5 L12.5 12.5" stroke-width="1.8" stroke-linecap="round"/></svg>
<svg class="abs" style="left:2175px;top:106px" width="10" height="14" viewBox="0 0 10 14"><path d="M7.5 1.5 L2.2 7 L7.5 12.5" fill="none" stroke="#fff" stroke-width="2"/></svg>
<svg class="abs" style="left:2206px;top:106px" width="10" height="14" viewBox="0 0 10 14"><path d="M2.5 1.5 L7.8 7 L2.5 12.5" fill="none" stroke="#d4d4d4" stroke-width="2"/></svg>
<div class="t" id="t_data" style="left:16.6px;top:17.84px;font-size:12.9px;color:#404040;letter-spacing:0.184px;-webkit-text-stroke:0.35px #404040;">Data</div>
<div class="t" id="t_models" style="left:76.4px;top:17.85px;font-size:12.9px;color:#404040;letter-spacing:0.368px;-webkit-text-stroke:0.35px #404040;">Models</div>
<div class="t" id="t_compare" style="left:151.6px;top:17.88px;font-size:12.9px;color:#404040;letter-spacing:0.320px;-webkit-text-stroke:0.35px #404040;">Compare</div>
<div class="t" id="t_analyze" style="left:238.4px;top:17.88px;font-size:12.9px;color:#404040;letter-spacing:0.106px;-webkit-text-stroke:0.35px #404040;">Analyze</div>
<div class="t" id="t_based" style="left:311.5px;top:17.93px;font-size:12.9px;color:#404040;letter-spacing:0.325px;-webkit-text-stroke:0.35px #404040;">Based on current filters:</div>
<div class="t" id="t_model" style="left:496.1px;top:19.27px;font-size:12.6px;color:#404040;letter-spacing:-0.282px;">v01_CATBC_01_07</div>
<div class="t" id="t_vc1" style="left:2103.3px;top:18.45px;font-size:12.9px;color:#404040;letter-spacing:0.455px;-webkit-text-stroke:0.35px #404040;">View configuration</div>
<div class="t" id="t_sheets" style="left:43.9px;top:65.49px;font-size:12.9px;color:#404040;letter-spacing:0.177px;-webkit-text-stroke:0.35px #404040;">Sheets</div>
<div class="t" id="t_chip1" style="left:239.4px;top:57.42px;font-size:10.8px;color:#404040;letter-spacing:0.424px;-webkit-text-stroke:0.35px #404040;">Feature</div>
<div class="t" id="t_chip2" style="left:239.1px;top:74.21px;font-size:10.8px;color:#a6a6a6;letter-spacing:-0.156px;">BaseFee</div>
<div class="t" id="t_export" style="left:2079.0px;top:65.44px;font-size:12.9px;color:#404040;letter-spacing:0.328px;-webkit-text-stroke:0.35px #404040;">Export data to catalog</div>
<div class="t" id="t_search" style="left:34.5px;top:116.95px;font-size:11.2px;color:#a9a9a9;letter-spacing:-0.159px;">Search</div>
<div class="t" id="t_myown" style="left:6.9px;top:148.89px;font-size:11.2px;color:#404040;letter-spacing:0.177px;-webkit-text-stroke:0.35px #404040;">My own (3)</div>
<div class="t" id="t_title" style="left:254.3px;top:103.40px;font-size:22px;color:#ffffff;letter-spacing:0.443px;">Impact by feature</div>
<div class="t" id="t_feat" style="left:280.4px;top:179.88px;font-size:12.4px;color:#404040;letter-spacing:0.025px;-webkit-text-stroke:0.35px #404040;">Feature</div>
<div class="t" id="t_ctitle" style="left:628.3px;top:168.99px;font-size:14px;color:#404040;letter-spacing:0.207px;font-weight:bold;">Impact distribution (SHAP)</div>
<div class="t" id="t_csub" style="left:628.3px;top:192.86px;font-size:12px;color:#8c8c8c;letter-spacing:0.455px;">How different values in a selected feature influence the prediction. Selected feature: BaseFee</div>
<div class="t" id="t_c1" style="left:22.3px;top:340.05px;font-size:11.1px;color:#404040;letter-spacing:0.210px;">Model overview</div>
<div class="t" id="t_c2a" style="left:22.3px;top:518.45px;font-size:11.1px;color:#404040;letter-spacing:0.128px;">Predictions and feature</div>
<div class="t" id="t_c2b" style="left:23.0px;top:534.24px;font-size:11.1px;color:#404040;letter-spacing:0.523px;">distribution</div>
<div class="t" id="t_c3" style="left:21.9px;top:711.71px;font-size:11.1px;color:#404040;letter-spacing:0.205px;">Impact by feature</div>
<div class="t" id="t_del" style="left:1913.4px;top:1024.85px;font-size:12.9px;color:#c4c4c4;letter-spacing:0.174px;-webkit-text-stroke:0.35px #c4c4c4;">Delete v1</div>
<div class="t" id="t_dep" style="left:2007.2px;top:1024.85px;font-size:12.9px;color:#404040;letter-spacing:0.288px;-webkit-text-stroke:0.35px #404040;">Deploy</div>
<div class="t" id="t_vc2" style="left:2095.2px;top:1024.93px;font-size:12.9px;color:#ffffff;letter-spacing:0.456px;-webkit-text-stroke:0.35px #ffffff;">View configuration</div>
<div class="t" id="t_f0" style="left:306.3px;top:220.27px;font-size:11.1px;color:#00873d;letter-spacing:-0.323px;">BaseFee</div>
<div class="t" id="t_f1" style="left:306.7px;top:249.32px;font-size:11.1px;color:#595959;letter-spacing:-0.346px;font-style:italic;">HasRenewed</div>
<div class="t" id="t_f2" style="left:306.8px;top:278.22px;font-size:11.1px;color:#595959;letter-spacing:-0.013px;font-style:italic;">NumberOfPenalties</div>
<div class="t" id="t_f3" style="left:306.7px;top:307.32px;font-size:11.1px;color:#595959;letter-spacing:-0.096px;font-style:italic;">PlanType</div>
<div class="t" id="t_f4" style="left:306.7px;top:336.32px;font-size:11.1px;color:#595959;letter-spacing:-0.079px;font-style:italic;">PriorPeriodUsage</div>
<div class="t" id="t_f5" style="left:306.7px;top:365.32px;font-size:11.1px;color:#595959;letter-spacing:0.188px;font-style:italic;">Promotion</div>
<div class="t" id="t_f6" style="left:306.6px;top:394.22px;font-size:11.1px;color:#595959;letter-spacing:-0.163px;font-style:italic;">ServiceRating</div>
<div class="t" id="t_f7" style="left:306.6px;top:423.22px;font-size:11.1px;color:#595959;letter-spacing:-0.269px;font-style:italic;">ServiceTickets</div>
</body>
</html>
